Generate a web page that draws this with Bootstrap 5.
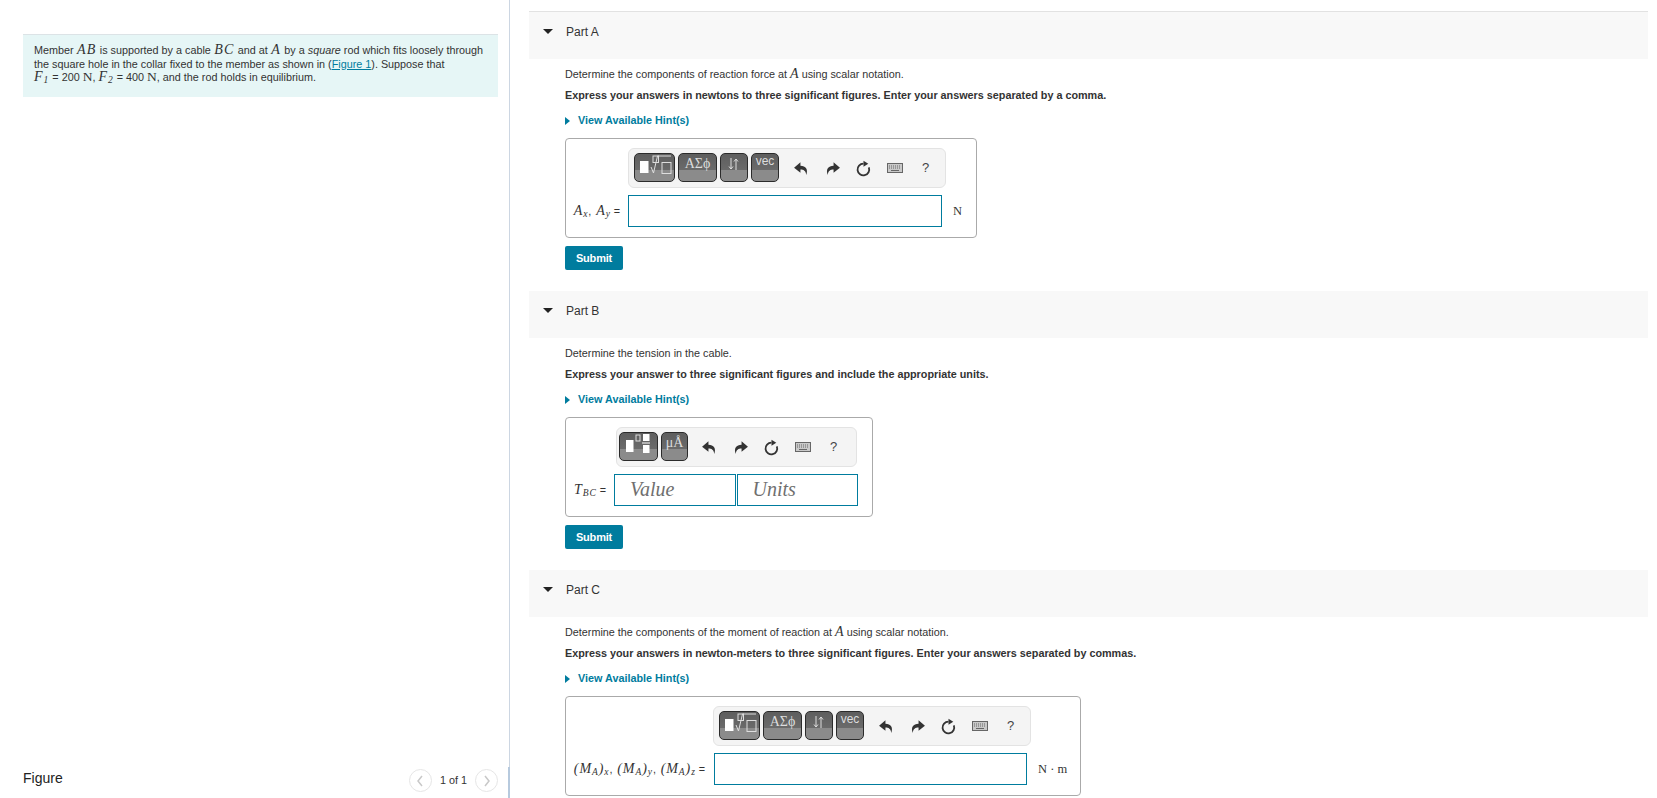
<!DOCTYPE html>
<html>
<head>
    <title>Part A</title>
    <link rel="stylesheet" href="https://cdn.jsdelivr.net/npm/bootstrap@5.3.0/dist/css/bootstrap.min.css">
    <style>
        html, body { height: 798px; overflow: hidden; background: #fff; }
        body { font-family: "Liberation Sans", Arial, sans-serif; font-size: 10.8px; color: #333; }
        .math { font-family: "Liberation Serif", serif; font-style: italic; font-size: 1.3em; line-height: 0; }
        .math-up { font-family: "Liberation Serif", serif; font-size: 1.25em; line-height: 0; }
        .math sub { font-size: .68em; bottom: -.2em; line-height: 0; }

        .left-pane { width: 510px; height: 798px; flex: none; padding: 34px 11px 0 23px; border-right: 1px solid #ccd6e2; position: relative; }
        .left-pane::after { content: ""; position: absolute; right: -1px; bottom: 0; width: 2px; height: 31px; background: #b7cade; }
        .intro { background: #e6f6f6; border-top: 1px solid #dce3e6; padding: 9px 11px; line-height: 13.5px; height: 63px; }
        .intro .math { letter-spacing: 1px; }
        .intro .math-pad { margin: 0 .5px; }
        .intro a { color: #007c9e; }
        .figure-bar { height: 29px; }
        .figure-title { font-size: 14px; color: #222; line-height: 18px; }
        .page-count { font-size: 10.8px; }
        .page-circle { width: 23px; height: 23px; border-radius: 50%; border: 1px solid #e6e6e6; }

        .right-pane { padding: 11px 9px 0 19px; min-width: 0; }
        .part { height: 280px; }
        .part + .part { height: 279px; }
        .part-head { height: 47px; background: #f8f8f8; padding-top: 13px; font-size: 12px; color: #333; line-height: 14px; }
        .part-first { border-top: 1px solid #e2e2e2; height: 48px; }
        .part-caret { width: 0; height: 0; border-left: 5px solid transparent; border-right: 5px solid transparent; border-top: 5px solid #222; margin: 0 13px 0 14px; }
        .part-body { padding-left: 36px; }
        .q-line { margin: 0; line-height: 13px; }
        .q-first { margin-top: 9px; }
        .q-bold { margin-top: 8px; font-weight: bold; }
        .hint { color: #007c9e; font-weight: bold; margin-top: 12px; line-height: 13px; }
        .hint-caret { width: 0; height: 0; border-top: 4px solid transparent; border-bottom: 4px solid transparent; border-left: 5px solid #007c9e; margin-right: 8px; }

        .answer { border: 1px solid #aaa; border-radius: 4px; margin-top: 11px; height: 100px; padding: 9px 0 0 9px; display: grid; align-content: start; }
        .answer-a { width: 412px; grid-template-columns: 53px 318px; }
        .answer-b { width: 308px; grid-template-columns: 39px 244px; }
        .answer-c { width: 516px; grid-template-columns: 138px 318px; }
        .eq-label { grid-column: 1; white-space: nowrap; align-self: center; padding-right: 7px; letter-spacing: .9px; display: flex; justify-content: flex-end; gap: 3px; }
        .unit { font-family: "Liberation Serif", serif; font-size: 12.5px; white-space: nowrap; align-self: center; margin-left: 11px; }
        .toolbar { grid-column: 2; height: 40px; background: #f4f4f4; border: 1px solid #e3e3e3; border-radius: 6px; padding: 4px 0 0 5px; gap: 3px; margin-bottom: 7px; }
        .answer-b .toolbar { margin-left: 2px; width: 241px; padding-left: 2px; }
        .answer-b .tool-icons { margin-left: 3px; }
        .answer-input { grid-column: 2; flex: none; height: 32px; border: 1px solid #007c9e; background: #fff; }
        .answer-a .answer-input { width: 314px; }
        .answer-c .answer-input { width: 313px; margin-left: 1px; }
        .pair { grid-column: 2; gap: 1px; }
        .pair-box { width: 122px; height: 32px; border: 1px solid #007c9e; font-family: "Liberation Serif", serif; font-style: italic; font-size: 20px; color: #6f6f6f; padding-left: 15px; line-height: 29px; }
        .tex-btn { flex: none; height: 29px; border: 1px solid #2b2b2b; border-radius: 5px; background: linear-gradient(#5e5e5e 0, #6a6a6a 58%, #8b8b8b 60%, #8b8b8b 100%); color: #ddd; font-size: 13px; line-height: 1; overflow: hidden; }
        .tex-btn svg { display: block; }
        .btn-w41 { width: 41px; }
        .btn-w39 { width: 39px; }
        .btn-w27 { width: 27px; }
        .btn-w28 { width: 28px; }
        .tex-sym { font-family: "Liberation Serif", serif; font-size: 14px; padding-top: 3px; }
        .tex-vec { font-size: 12px; padding-top: 1px; }
        .tex-arrows svg { margin: 2px auto 0; }
        .tool-icons { gap: 0; margin-left: 4px; }
        .tool-icon { width: 31px; height: 30px; color: #333; }
        .tool-help { font-size: 13px; color: #444; }
        .btn-submit { background: #007c9e; border: 0; border-radius: 2px; color: #fff; font-weight: bold; font-size: 11px; padding: 0; width: 58px; height: 24px; margin-top: 8px; display: block; letter-spacing: -.2px; }
        .btn-submit:hover { background: #007c9e; color: #fff; }
    </style>
</head>
<body>
    <svg width="0" height="0" class="position-absolute">
        <symbol id="i-undo" viewBox="0 0 16 16"><path fill="currentColor" d="M7 2 1 7.200 7 12V9c3 0 5 1.200 5.500 5 2-5-.5-8.500-5.500-8.500z"/></symbol>
        <symbol id="i-redo" viewBox="0 0 16 16"><path fill="currentColor" d="M9 2l6 5.200L9 12V9c-3 0-5 1.200-5.500 5-2-5 .5-8.500 5.500-8.500z"/></symbol>
        <symbol id="i-reset" viewBox="0 0 16 16"><path fill="none" stroke="currentColor" stroke-width="1.700" d="M8 3.500A5.500 5.500 0 1 0 13 7"/><path fill="currentColor" d="M8 .6l4.500 2.900L8 6.400z"/></symbol>
        <symbol id="i-keys" viewBox="0 0 16 10"><rect x=".5" y=".5" width="15" height="9" fill="#c9c9c9" stroke="#666"/><path stroke="#666" stroke-dasharray="1 1" d="M2 3h12M2 5h12"/><path stroke="#666" d="M4 7.500h8"/></symbol>
        <symbol id="i-root" viewBox="0 0 39 27"><rect x="5" y="7" width="8.500" height="12" fill="#fff"/><rect x="18" y="2" width="5.500" height="6.500" fill="none" stroke="#ddd"/><path fill="none" stroke="#ddd" d="M16 13l2.500 6 4-17H36"/><rect x="27" y="8.500" width="9" height="11" fill="none" stroke="#ddd"/></symbol>
        <symbol id="i-frac" viewBox="0 0 37 27"><rect x="6" y="7" width="7.500" height="12" fill="#fff"/><rect x="16" y="2" width="4" height="6" fill="none" stroke="#ddd"/><rect x="23" y="1" width="6.500" height="7" fill="#fff"/><rect x="22" y="9.500" width="8" height="1" fill="#fff"/><rect x="23" y="12" width="6.500" height="8" fill="#fff"/></symbol>
        <symbol id="i-arrows" viewBox="0 0 14 16"><path fill="none" stroke="#ddd" d="M4 2v11M2 10.500 4 13l2-2.500M9 14V3M7 5.500 9 3l2 2.500"/></symbol>
    </svg>

    <div class="d-flex">
        <div class="left-pane d-flex flex-column justify-content-between">
            <div class="intro">Member <span class="math math-pad">AB</span> is supported by a cable <span class="math math-pad">BC</span> and at <span class="math math-pad">A</span> by a <em>square</em> rod which fits loosely through the square hole in the collar fixed to the member as shown in (<a href="#">Figure 1</a>). Suppose that<br><span class="math">F<sub>1</sub></span> = 200 <span class="math-up">N</span>, <span class="math">F<sub>2</sub></span> = 400 <span class="math-up">N</span>, and the rod holds in equilibrium.</div>
            <div class="figure-bar d-flex align-items-start justify-content-between">
                <span class="figure-title">Figure</span>
                <div class="d-flex align-items-center gap-2 page-count">
                    <span class="page-circle d-flex align-items-center justify-content-center"><svg width="8" height="12" viewBox="0 0 8 12"><path fill="none" stroke="#c8c8c8" stroke-width="1.500" d="M6 1 2 6l4 5"/></svg></span>
                    <span>1 of 1</span>
                    <span class="page-circle d-flex align-items-center justify-content-center"><svg width="8" height="12" viewBox="0 0 8 12"><path fill="none" stroke="#c8c8c8" stroke-width="1.500" d="M2 1l4 5-4 5"/></svg></span>
                </div>
            </div>
        </div>

        <div class="right-pane flex-grow-1">
            <section class="part">
                <div class="part-head part-first d-flex"><span class="part-caret mt-1"></span>Part A</div>
                <div class="part-body">
                    <p class="q-line q-first">Determine the components of reaction force at <span class="math">A</span> using scalar notation.</p>
                    <p class="q-line q-bold">Express your answers in newtons to three significant figures. Enter your answers separated by a comma.</p>
                    <div class="hint d-flex align-items-center"><span class="hint-caret"></span>View Available Hint(s)</div>
                    <div class="answer answer-a">
                        <div class="toolbar d-flex">
                            <span class="tex-btn btn-w41"><svg width="39" height="27"><use href="#i-root"/></svg></span>
                            <span class="tex-btn btn-w39 tex-sym text-center">ΑΣϕ</span>
                            <span class="tex-btn btn-w28 tex-arrows"><svg width="14" height="16"><use href="#i-arrows"/></svg></span>
                            <span class="tex-btn btn-w28 tex-vec text-center">vec</span>
                            <div class="tool-icons d-flex">
                                <span class="tool-icon d-flex align-items-center justify-content-center"><svg width="17" height="17"><use href="#i-undo"/></svg></span>
                                <span class="tool-icon d-flex align-items-center justify-content-center"><svg width="17" height="17"><use href="#i-redo"/></svg></span>
                                <span class="tool-icon d-flex align-items-center justify-content-center"><svg width="17" height="17"><use href="#i-reset"/></svg></span>
                                <span class="tool-icon d-flex align-items-center justify-content-center"><svg width="16" height="10"><use href="#i-keys"/></svg></span>
                                <span class="tool-icon tool-help d-flex align-items-center justify-content-center">?</span>
                            </div>
                        </div>
                        <div class="eq-label"><span><span class="math">A<sub>x</sub></span>, <span class="math">A<sub>y</sub></span></span><span>=</span></div>
                        <div class="d-flex">
                            <div class="answer-input"></div>
                            <span class="unit">N</span>
                        </div>
                    </div>
                    <button class="btn btn-submit">Submit</button>
                </div>
            </section>

            <section class="part">
                <div class="part-head d-flex"><span class="part-caret mt-1"></span>Part B</div>
                <div class="part-body">
                    <p class="q-line q-first">Determine the tension in the cable.</p>
                    <p class="q-line q-bold">Express your answer to three significant figures and include the appropriate units.</p>
                    <div class="hint d-flex align-items-center"><span class="hint-caret"></span>View Available Hint(s)</div>
                    <div class="answer answer-b">
                        <div class="toolbar d-flex">
                            <span class="tex-btn btn-w39"><svg width="37" height="27"><use href="#i-frac"/></svg></span>
                            <span class="tex-btn btn-w27 tex-sym text-center">μÅ</span>
                            <div class="tool-icons d-flex">
                                <span class="tool-icon d-flex align-items-center justify-content-center"><svg width="17" height="17"><use href="#i-undo"/></svg></span>
                                <span class="tool-icon d-flex align-items-center justify-content-center"><svg width="17" height="17"><use href="#i-redo"/></svg></span>
                                <span class="tool-icon d-flex align-items-center justify-content-center"><svg width="17" height="17"><use href="#i-reset"/></svg></span>
                                <span class="tool-icon d-flex align-items-center justify-content-center"><svg width="16" height="10"><use href="#i-keys"/></svg></span>
                                <span class="tool-icon tool-help d-flex align-items-center justify-content-center">?</span>
                            </div>
                        </div>
                        <div class="eq-label"><span><span class="math">T<sub>BC</sub></span></span><span>=</span></div>
                        <div class="pair d-flex">
                            <div class="pair-box">Value</div>
                            <div class="pair-box">Units</div>
                        </div>
                    </div>
                    <button class="btn btn-submit">Submit</button>
                </div>
            </section>

            <section class="part">
                <div class="part-head d-flex"><span class="part-caret mt-1"></span>Part C</div>
                <div class="part-body">
                    <p class="q-line q-first">Determine the components of the moment of reaction at <span class="math">A</span> using scalar notation.</p>
                    <p class="q-line q-bold">Express your answers in newton-meters to three significant figures. Enter your answers separated by commas.</p>
                    <div class="hint d-flex align-items-center"><span class="hint-caret"></span>View Available Hint(s)</div>
                    <div class="answer answer-c">
                        <div class="toolbar d-flex">
                            <span class="tex-btn btn-w41"><svg width="39" height="27"><use href="#i-root"/></svg></span>
                            <span class="tex-btn btn-w39 tex-sym text-center">ΑΣϕ</span>
                            <span class="tex-btn btn-w28 tex-arrows"><svg width="14" height="16"><use href="#i-arrows"/></svg></span>
                            <span class="tex-btn btn-w28 tex-vec text-center">vec</span>
                            <div class="tool-icons d-flex">
                                <span class="tool-icon d-flex align-items-center justify-content-center"><svg width="17" height="17"><use href="#i-undo"/></svg></span>
                                <span class="tool-icon d-flex align-items-center justify-content-center"><svg width="17" height="17"><use href="#i-redo"/></svg></span>
                                <span class="tool-icon d-flex align-items-center justify-content-center"><svg width="17" height="17"><use href="#i-reset"/></svg></span>
                                <span class="tool-icon d-flex align-items-center justify-content-center"><svg width="16" height="10"><use href="#i-keys"/></svg></span>
                                <span class="tool-icon tool-help d-flex align-items-center justify-content-center">?</span>
                            </div>
                        </div>
                        <div class="eq-label"><span><span class="math">(M<sub>A</sub>)<sub>x</sub></span>, <span class="math">(M<sub>A</sub>)<sub>y</sub></span>, <span class="math">(M<sub>A</sub>)<sub>z</sub></span></span><span>=</span></div>
                        <div class="d-flex">
                            <div class="answer-input"></div>
                            <span class="unit">N · m</span>
                        </div>
                    </div>
                </div>
            </section>
        </div>
    </div>
    <script src="https://cdn.jsdelivr.net/npm/bootstrap@5.3.0/dist/js/bootstrap.bundle.min.js"></script>
</body>
</html>
